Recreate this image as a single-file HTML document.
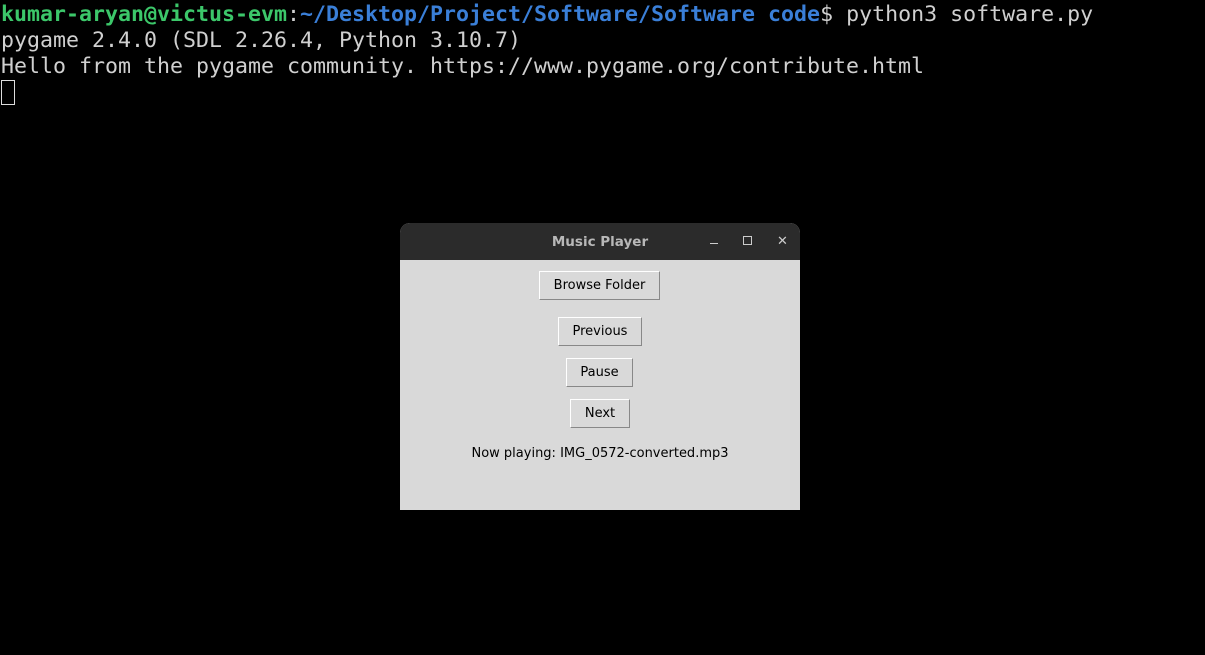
<!DOCTYPE html>
<html><head><style>
body{margin:0;width:1205px;height:655px;background:#000;overflow:hidden;position:relative;font-family:"DejaVu Sans Mono",monospace;}
.t{position:absolute;left:1px;font-size:21.6px;color:#d0d0d0;white-space:pre;line-height:26px;}
.g{color:#3cc76a;font-weight:bold}.b{color:#3a7fd8;font-weight:bold}
.cur{position:absolute;left:1px;top:80px;width:12px;height:23px;border:1px solid #ddd;}
.win{position:absolute;left:400px;top:223px;width:400px;height:287px;background:#d9d9d9;border-radius:10px 10px 0 0;overflow:hidden}
.tb{height:37px;background:#2b2b2b;color:#b8b8b8;font:bold 13.5px "DejaVu Sans",sans-serif;text-align:center;line-height:38px;position:relative}
.btn{position:absolute;background:#d9d9d9;border:1px solid;border-color:#fff #888 #888 #fff;font:13px "DejaVu Sans",sans-serif;color:#000;text-align:center;box-sizing:border-box}
.ic{position:absolute;top:0;color:#ccc;font:13px "DejaVu Sans",sans-serif;line-height:37px}
</style></head><body>
<div class="t" style="top:2px"><span class="g">kumar-aryan@victus-evm</span>:<span class="b">~/Desktop/Project/Software/Software code</span>$ python3 software.py</div>
<div class="t" style="top:28px">pygame 2.4.0 (SDL 2.26.4, Python 3.10.7)</div>
<div class="t" style="top:54px">Hello from the pygame community. https://www.pygame.org/contribute.html</div>
<div class="cur"></div>
<div class="win">
<div class="tb">Music Player
<span style="position:absolute;left:310px;top:20px;width:8px;height:1px;background:#ccc"></span>
<span class="ic" style="left:343px;top:0"><span style="display:inline-block;width:7px;height:7px;border:1px solid #ccc"></span></span>
<span class="ic" style="left:377px">✕</span>
</div>
<div class="btn" style="left:139px;top:48px;width:121px;height:29px;line-height:28px">Browse Folder</div>
<div class="btn" style="left:158px;top:94px;width:84px;height:29px;line-height:28px">Previous</div>
<div class="btn" style="left:166px;top:135px;width:67px;height:29px;line-height:28px">Pause</div>
<div class="btn" style="left:170px;top:176px;width:60px;height:29px;line-height:28px">Next</div>
<div style="position:absolute;left:0;width:400px;top:223px;text-align:center;font:13px 'DejaVu Sans',sans-serif;color:#000">Now playing: IMG_0572-converted.mp3</div>
</div>
</body></html>
